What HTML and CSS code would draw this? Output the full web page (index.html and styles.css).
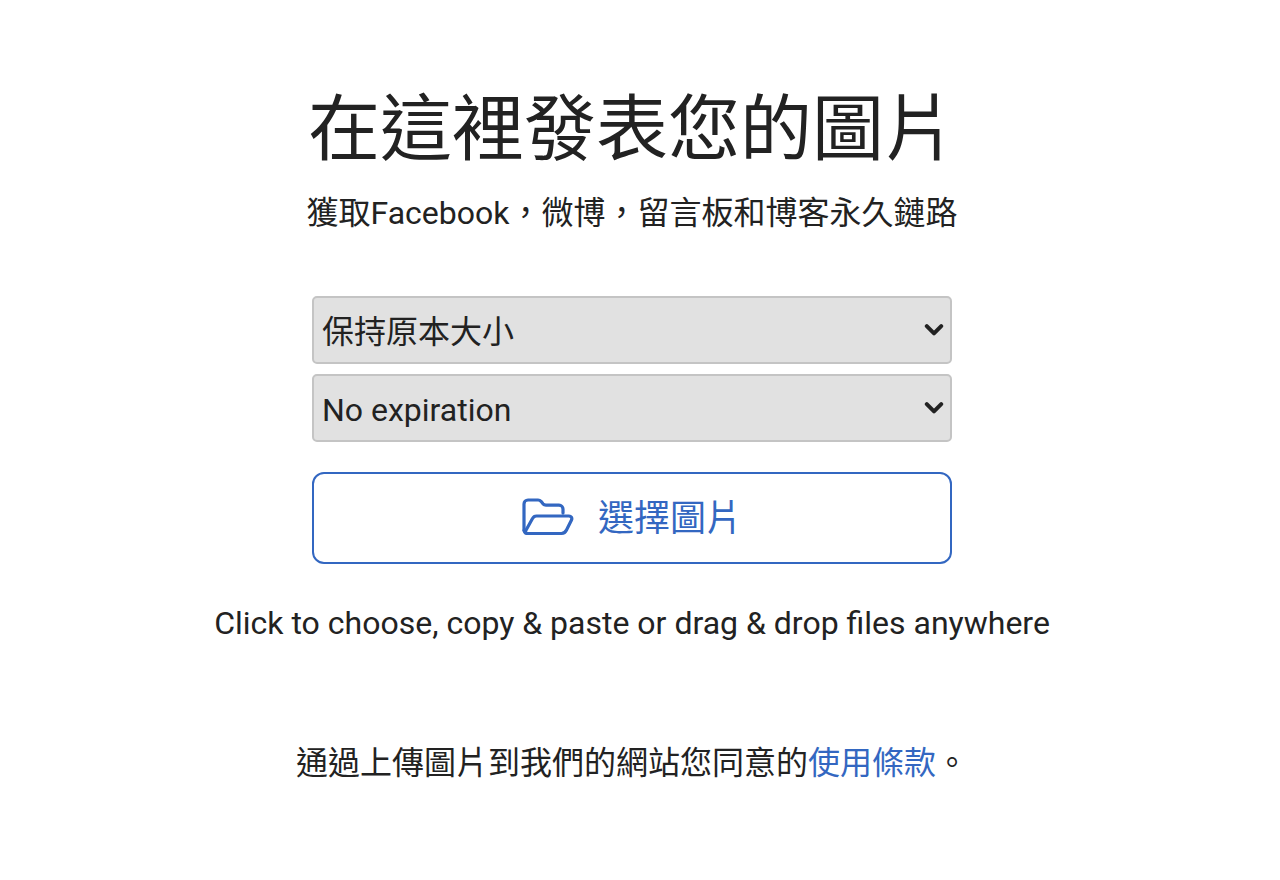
FILE: index.html
```html
<!DOCTYPE html>
<html lang="zh-Hant">
<head>
<meta charset="utf-8">
<title>在這裡發表您的圖片</title>
<link rel="stylesheet" href="styles.css">
</head>
<body>
<main class="page">
  <h1 class="title">在這裡發表您的圖片</h1>
  <p class="subtitle">獲取Facebook，微博，留言板和博客永久鏈路</p>
  <form class="form">
    <div class="select-wrap">
      <select class="select"><option>保持原本大小</option></select>
      <svg class="chevron" viewBox="0 0 18 12" aria-hidden="true"><path d="M2.500 2.500 9 9l6.500-6.500"/></svg>
    </div>
    <div class="select-wrap">
      <select class="select"><option>No expiration</option></select>
      <svg class="chevron" viewBox="0 0 18 12" aria-hidden="true"><path d="M2.500 2.500 9 9l6.500-6.500"/></svg>
    </div>
    <button class="pick" type="button">
      <svg class="folder" viewBox="0 0 52 38" aria-hidden="true"><path d="M2 32V6a4 4 0 0 1 4-4h10a4 4 0 0 1 3 1.300l2 2.500a4 4 0 0 0 3 1.300h13a4 4 0 0 1 4 4v4"/><path d="M3 34l7.500-13.500a4.500 4.500 0 0 1 4-2.500H47c2 0 3.500 2 2.500 4l-5 10a6 6 0 0 1-5 3.500H6a4 4 0 0 1-4-3"/></svg>
      <span class="pick-label">選擇圖片</span>
    </button>
  </form>
  <p class="hint">Click to choose, copy &amp; paste or drag &amp; drop files anywhere</p>
  <p class="terms">通過上傳圖片到我們的網站您同意的<a class="link" href="#">使用條款</a>。</p>
</main>
</body>
</html>
```
FILE: styles.css
```css
* { box-sizing: border-box; }
html, body { margin: 0; background: #fff; }
body {
  font-family: Roboto, "Noto Sans CJK TC", sans-serif;
  color: #222;
}
.page {
  display: flex;
  flex-direction: column;
  align-items: center;
  width: 1264px;
  height: 880px;
  overflow: hidden;
  padding-top: 84px;
}
.title {
  margin: 0;
  font-size: 72px;
  font-weight: 400;
  line-height: 92px;
}
.subtitle {
  margin: 14px 0 0;
  font-size: 32px;
  line-height: 46px;
}
.form {
  width: 640px;
  margin-top: 60px;
  display: flex;
  flex-direction: column;
}
.select-wrap {
  position: relative;
  height: 68px;
  margin-bottom: 10px;
}
.select {
  display: block;
  width: 100%;
  height: 100%;
  appearance: none;
  background: #e1e1e1;
  border: 2px solid #c4c4c4;
  border-radius: 5px;
  padding: 3px 8px 0;
  font: 400 32px Roboto, "Noto Sans CJK TC", sans-serif;
  color: #222;
}
.chevron {
  position: absolute;
  right: 8px;
  top: 27px;
  width: 20px;
  height: 14px;
  fill: none;
  stroke: #222;
  stroke-width: 3.6;
  stroke-linecap: round;
  stroke-linejoin: round;
}
.pick {
  margin-top: 20px;
  height: 92px;
  display: flex;
  align-items: center;
  justify-content: center;
  gap: 24px;
  background: #fff;
  border: 2px solid #3367c1;
  border-radius: 12px;
  color: #3367c1;
  font: 400 36px Roboto, "Noto Sans CJK TC", sans-serif;
}
.pick-label {
  line-height: 46px;
  margin-top: 2px;
}
.folder {
  width: 52px;
  height: 38px;
  margin-bottom: 3px;
  fill: none;
  stroke: #3367c1;
  stroke-width: 3.2;
  stroke-linecap: round;
  stroke-linejoin: round;
}
.hint {
  margin: 36px 0 0;
  font-size: 32px;
  line-height: 46px;
  white-space: nowrap;
}
.terms {
  margin: 94px 0 0;
  font-size: 32px;
  line-height: 46px;
  white-space: nowrap;
}
.link {
  color: #3367c1;
  text-decoration: none;
}
```
